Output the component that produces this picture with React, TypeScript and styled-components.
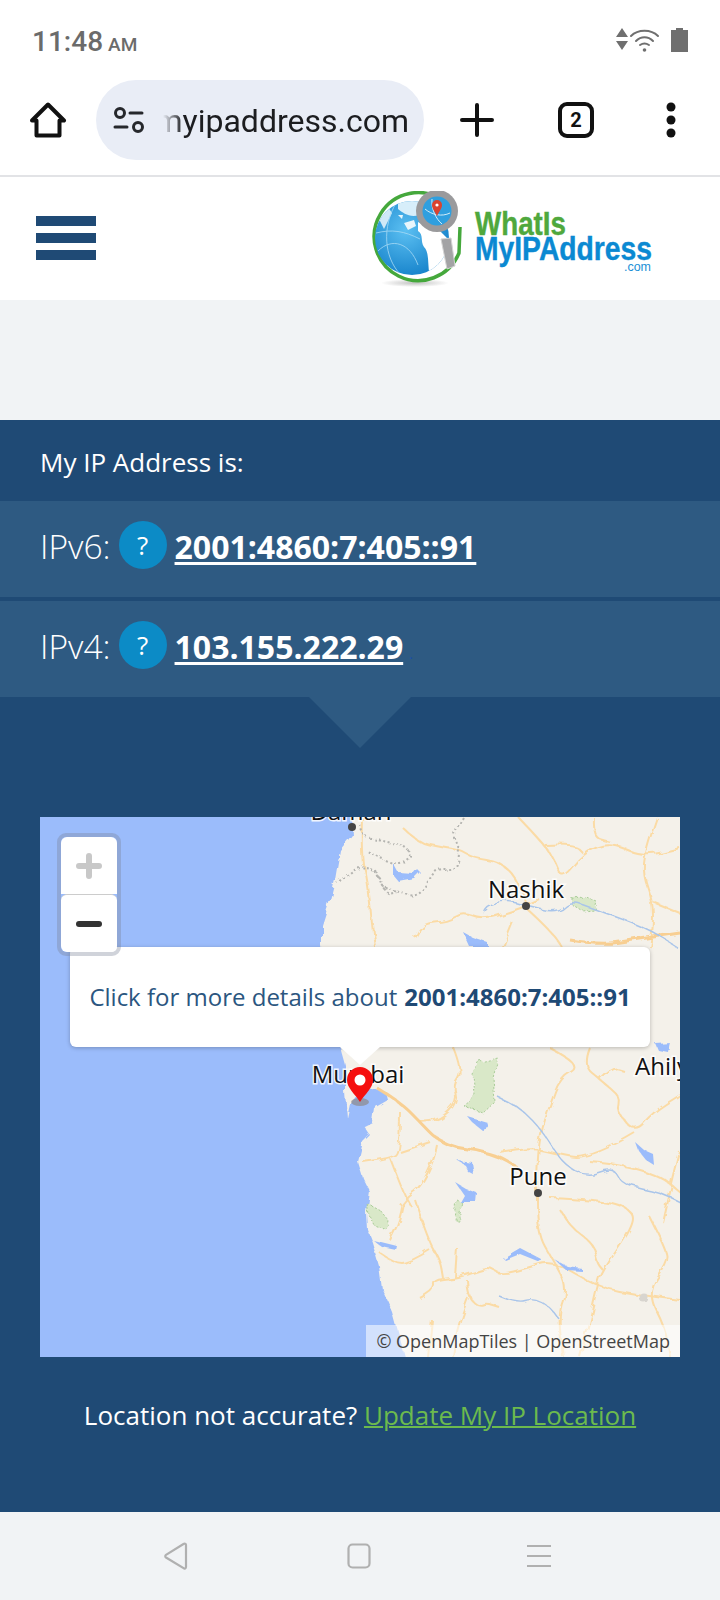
import React from 'react';
import styled, { createGlobalStyle } from 'styled-components';

const GlobalStyle = createGlobalStyle`
  html, body {
    margin: 0;
    padding: 0;
    background: #ffffff;
  }
  * {
    box-sizing: border-box;
  }
`;

const Page = styled.div`
  width: 720px;
  height: 1600px;
  display: flex;
  flex-direction: column;
  overflow: hidden;
  font-family: 'Open Sans', sans-serif;
`;

const StatusBar = styled.div`
  height: 73px;
  flex: none;
  display: flex;
  justify-content: space-between;
  align-items: center;
  padding: 10px 32px 0 32px;
  font-family: Roboto, sans-serif;
  color: #6b6b6b;
`;

const Clock = styled.div`
  font-size: 28px;
  font-weight: 500;
  small {
    font-size: 19px;
    font-weight: 500;
    margin-left: 5px;
  }
`;

const StatusIcons = styled.div`
  display: flex;
  align-items: center;
  margin-top: -3px;
`;

const Toolbar = styled.div`
  height: 104px;
  flex: none;
  display: flex;
  align-items: center;
  padding: 0 0 8px 0;
  border-bottom: 2px solid #e2e3e6;
`;

const ToolSlot = styled.div<{ $w: number }>`
  width: ${p => p.$w}px;
  flex: none;
  display: flex;
  justify-content: center;
  align-items: center;
`;

const UrlPill = styled.div`
  width: 328px;
  height: 80px;
  flex: none;
  border-radius: 40px;
  background: #e9edf6;
  display: flex;
  align-items: center;
  padding: 0 15px 0 17px;
  gap: 18px;
`;

const UrlText = styled.div`
  flex: 1;
  min-width: 0;
  display: flex;
  justify-content: flex-end;
  overflow: hidden;
  white-space: nowrap;
  padding-top: 1px;
  font-family: Roboto, sans-serif;
  font-size: 32px;
  color: #1c1d20;
  -webkit-mask-image: linear-gradient(to right, transparent 0, #000 20px);
  mask-image: linear-gradient(to right, transparent 0, #000 20px);
`;

const TabCount = styled.div`
  width: 36px;
  height: 36px;
  border: 4px solid #111;
  border-radius: 9px;
  display: flex;
  align-items: center;
  justify-content: center;
  font-family: Roboto, sans-serif;
  font-weight: 700;
  font-size: 20px;
  color: #111;
`;

const SiteHeader = styled.header`
  height: 123px;
  flex: none;
  background: #fff;
  display: flex;
  justify-content: space-between;
  align-items: center;
  padding: 0 64px 0 36px;
`;

const Burger = styled.div`
  width: 60px;
  display: flex;
  flex-direction: column;
  gap: 7px;
  margin-top: -2px;
  span {
    display: block;
    height: 10px;
    background: #1f4a75;
  }
`;

const AdSpace = styled.div`
  height: 120px;
  flex: none;
  background: #f1f3f5;
`;

const Hero = styled.section`
  flex: 1;
  background: #1f4a75;
  color: #fff;
  display: flex;
  flex-direction: column;
`;

const Lead = styled.div`
  height: 81px;
  flex: none;
  display: flex;
  align-items: center;
  padding: 3px 40px 0;
  font-size: 26px;
`;

const IpRow = styled.div<{ $gap?: number }>`
  height: 96px;
  flex: none;
  margin-top: ${p => p.$gap ?? 0}px;
  background: #2e5a82;
  display: flex;
  align-items: center;
  padding: 0 0 6px 40px;
`;

const IpLabel = styled.span`
  font-size: 33.5px;
  font-weight: 300;
`;

const HelpBadge = styled.span`
  width: 48px;
  height: 48px;
  margin: 0 8px 3px;
  flex: none;
  border-radius: 50%;
  background: #0c8bc6;
  display: flex;
  align-items: center;
  justify-content: center;
  font-size: 26px;
  font-weight: 400;
`;

const IpLink = styled.a`
  font-size: 32px;
  font-weight: 700;
  color: #fff;
  text-decoration: underline;
  text-decoration-thickness: 3px;
  text-underline-offset: 3px;
`;

const Speck = styled.span`
  font-size: 14px;
  color: #1a4fa8;
  margin: 14px 0 0 6px;
`;

const Pointer = styled.div`
  width: 0;
  height: 0;
  flex: none;
  align-self: center;
  border-left: 51px solid transparent;
  border-right: 51px solid transparent;
  border-top: 51px solid #2e5a82;
`;

const MapFrame = styled.div`
  position: relative;
  height: 540px;
  flex: none;
  margin: 69px 40px 0;
  overflow: hidden;
  background: #9bbcfb;
`;

const MapCanvas = styled.svg`
  display: block;
  width: 640px;
  height: 540px;
`;

const CityLabel = styled.text`
  font-family: 'Open Sans', sans-serif;
  font-size: 24px;
  fill: #111;
  stroke: rgba(255, 255, 255, 0.85);
  stroke-width: 3px;
  paint-order: stroke;
`;

const ZoomBox = styled.div`
  position: absolute;
  left: 17px;
  top: 16px;
  width: 64px;
  height: 123px;
  border: 4px solid rgba(120, 130, 150, 0.35);
  border-radius: 9px;
  display: flex;
  flex-direction: column;
  background-clip: padding-box;
`;

const ZoomButton = styled.div<{ $top?: boolean }>`
  flex: 1;
  background: #fff;
  display: flex;
  align-items: center;
  justify-content: center;
  border-radius: ${p => (p.$top ? '6px 6px 0 0' : '6px')};
  border-top: ${p => (p.$top ? 'none' : '1px solid #ccc')};
`;

const Tooltip = styled.div`
  position: absolute;
  left: 30px;
  top: 130px;
  width: 580px;
  height: 100px;
  padding-bottom: 2px;
  background: #fff;
  border-radius: 6px;
  box-shadow: 0 1px 4px rgba(0, 0, 0, 0.25);
  display: flex;
  align-items: center;
  justify-content: center;
  font-size: 24px;
  color: #2b5680;
  white-space: nowrap;

  b {
    margin-left: 7px;
    font-weight: 700;
    color: #1f4a75;
  }

  &::after {
    content: '';
    position: absolute;
    left: 270px;
    top: 100px;
    border-left: 20px solid transparent;
    border-right: 20px solid transparent;
    border-top: 18px solid #fff;
  }
`;

const Attribution = styled.div`
  position: absolute;
  right: 0;
  bottom: 0;
  height: 32px;
  width: 314px;
  padding-right: 10px;
  background: rgba(255, 255, 255, 0.55);
  display: flex;
  align-items: center;
  justify-content: flex-end;
  font-size: 18px;
  color: #444;
  white-space: nowrap;
`;

const LocationNote = styled.div`
  margin-top: 40px;
  text-align: center;
  font-size: 26px;
  white-space: nowrap;

  a {
    color: #6cba4e;
    text-decoration: underline;
    text-decoration-thickness: 2px;
  }
`;

const NavBar = styled.nav`
  height: 88px;
  flex: none;
  background: #f1f3f5;
  display: flex;
  align-items: center;
  justify-content: center;
  gap: 158px;
  padding-right: 5px;

  svg:last-child {
    margin-left: -3px;
  }
`;

// roads, in page coordinates, same space as the map viewBox
const minorRoads = [
  'M363 817L362 858L368 882L372 925L375 947',
  'M403 828L417 842L440 847L460 850L473 858L500 862L517 878L527 905',
  'M526 906L507 913L482 920L463 912L447 922L423 923L415 938',
  'M526 908L550 930L562 947',
  'M513 922L503 947',
  'M526 906L540 900',
  'M518 817L545 845L555 862L562 880L583 853L610 842L643 857L680 848',
  'M545 845L573 843L583 853',
  'M593 817L592 837L610 842',
  'M657 817L645 852L643 875L653 902L653 928L650 947',
  'M653 902L680 913',
  'M453 1047L463 1072L453 1085L458 1102L440 1120L420 1122',
  'M550 1048L583 1065L560 1078L550 1105L540 1135L537 1168L537 1233L553 1260L568 1288L558 1313L563 1357',
  'M590 1048L583 1065L600 1080L622 1098L617 1112L635 1133L653 1112L680 1095',
  'M600 1080L613 1067L623 1070',
  'M635 1133L590 1160L553 1153L533 1148L500 1153',
  'M590 1162L627 1165L663 1178L680 1192',
  'M680 1152L670 1192L663 1223',
  'M437 1145L435 1158L420 1188L408 1195L400 1205',
  'M400 1112L400 1152L390 1158L363 1162',
  'M430 1142L400 1152',
  'M390 1158L403 1192L410 1205',
  'M550 1198L600 1200L633 1210L633 1227L603 1270L597 1287L590 1320L580 1357',
  'M403 1203L400 1220L390 1240',
  'M415 1200L428 1240L440 1260L443 1278',
  'M380 1253L397 1265L413 1260L430 1250',
  'M420 1298L435 1290L433 1280L453 1278L467 1275L490 1267L500 1275L527 1268L553 1260L597 1287L640 1295L680 1300',
  'M457 1248L455 1277',
  'M467 1280L468 1298L480 1307L487 1304L500 1308',
  'M468 1298L457 1327L453 1357',
  'M560 1210L570 1227L593 1243L597 1263L603 1270',
  'M650 1217L667 1250L668 1263L647 1293L665 1327L670 1357',
  'M432 1320L428 1357',
];

const majorRoads = [
  'M377 1088L400 1102L420 1122L437 1140L457 1148L477 1150L500 1157L517 1167',
  'M570 940L600 945L633 940L680 933',
];

const rivers = [
  'M483 913L485 905L507 900L526 906L557 913L570 900L597 910L630 922L653 932L677 947',
  'M498 1097L520 1107L543 1132L553 1148L565 1165L587 1177L613 1167L620 1182L640 1188L660 1192L680 1202',
  'M498 1295L517 1303L533 1298L550 1307L558 1318',
];

const borders = [
  'M463 817L452 835L460 848L457 870L437 868L427 883L417 898L393 890L380 885L377 872L360 865L337 883',
  'M360 825L363 838L380 840L407 847L412 857L397 865L380 858L368 852',
  'M377 872L385 895L397 892',
];

const lakes = [
  'M393 863L398 872L412 873L416 868L420 872L414 878L398 881L393 875Z',
  'M463 932L472 937L487 942L487 947L470 947Z',
  'M467 1116L487 1122L489 1128L482 1130L472 1122Z',
  'M635 1142L644 1150L653 1154L654 1165L646 1160L638 1150Z',
  'M457 1160L472 1162L474 1175L468 1172L464 1164Z',
  'M455 1182L465 1188L476 1192L475 1202L460 1202L464 1195Z',
  'M373 1240L397 1246L396 1250L382 1247Z',
  'M503 1258L520 1248L541 1259L540 1262L520 1254L505 1260Z',
  'M553 1258L567 1266L582 1268L582 1271L566 1270Z',
  'M655 1043L670 1042L668 1052L658 1050Z',
];

const forests = [
  'M480 1062L498 1058L493 1078L495 1102L483 1113L463 1105L475 1095L473 1075Z',
  'M572 898L585 897L597 902L595 910L582 911L572 905Z',
  'M367 1203L380 1210L388 1220L387 1230L374 1225L369 1215Z',
  'M457 1200L463 1203L458 1220L455 1220Z',
];

// runs past the frame on three sides so the rough filter leaves no gap at the edges
const land =
  'M350 790L352 835L340 850L335 880L330 900L322 925L322 947L340 1047L345 1065L345 1092L347 1118L350 1104L358 1094L372 1088L386 1092L388 1100L374 1108L372 1122L364 1126L370 1135L363 1142L358 1162L363 1178L370 1192L367 1213L368 1230L373 1243L380 1267L383 1290L393 1313L405 1357L412 1385L710 1385L710 790Z';

// turns the straight segments above into soft curves
const smooth = (d: string): string => {
  const n = d.match(/\d+/g)!.map(Number);
  const pts: [number, number][] = [];
  for (let i = 0; i < n.length; i += 2) pts.push([n[i], n[i + 1]]);
  let out = `M${pts[0][0]} ${pts[0][1]}`;
  for (let i = 1; i < pts.length - 1; i++) {
    const mx = (pts[i][0] + pts[i + 1][0]) / 2;
    const my = (pts[i][1] + pts[i + 1][1]) / 2;
    out += `Q${pts[i][0]} ${pts[i][1]} ${mx} ${my}`;
  }
  const last = pts[pts.length - 1];
  return `${out}L${last[0]} ${last[1]}`;
};

const MapDrawing: React.FC = () => (
  <MapCanvas viewBox="40 817 640 540">
    <defs>
      <filter id="rough" x="-5%" y="-5%" width="110%" height="110%">
        <feTurbulence type="fractalNoise" baseFrequency="0.07" numOctaves="3" seed="4" />
        <feDisplacementMap in="SourceGraphic" scale="7" />
        <feGaussianBlur stdDeviation="0.35" />
      </filter>
    </defs>
    <g filter="url(#rough)">
      <path d={land} fill="#f4f1ea" />
      {forests.map(d => (
        <path key={d} d={d} fill="#d9e8c8" stroke="#a9cc98" strokeDasharray="2 2" />
      ))}
      {minorRoads.map(d => (
        <path key={d} d={smooth(d)} fill="none" stroke="#fbdba5" strokeWidth="2" />
      ))}
      {majorRoads.map(d => (
        <path key={d} d={smooth(d)} fill="none" stroke="#f8cf92" strokeWidth="3" />
      ))}
      {rivers.map(d => (
        <path key={d} d={smooth(d)} fill="none" stroke="#a9c5ea" strokeWidth="1.4" />
      ))}
      {borders.map(d => (
        <path key={d} d={smooth(d)} fill="none" stroke="#b4b4b0" strokeWidth="2" strokeDasharray="2 2.5" />
      ))}
      {lakes.map(d => (
        <path key={d} d={d} fill="#9bbcfb" />
      ))}
      <circle cx="643" cy="1297" r="4.5" fill="#d8d5cf" />
    </g>
    <circle cx="352" cy="827" r="4" fill="#444" />
    <circle cx="526" cy="906" r="4" fill="#444" />
    <circle cx="538" cy="1193" r="4" fill="#444" />
    <CityLabel x="351" y="820" textAnchor="middle">Daman</CityLabel>
    <CityLabel x="526" y="898" textAnchor="middle">Nashik</CityLabel>
    <CityLabel x="358" y="1083" textAnchor="middle">Mumbai</CityLabel>
    <CityLabel x="538" y="1185" textAnchor="middle">Pune</CityLabel>
    <CityLabel x="635" y="1075">Ahilyanagar</CityLabel>
    <ellipse cx="360" cy="1102" rx="9" ry="4" fill="#8a8078" opacity="0.6" />
    <path
      d="M360 1102C355 1094 347 1088 347 1080A13 13 0 0 1 373 1080C373 1088 365 1094 360 1102Z"
      fill="#f50f0f"
    />
    <circle cx="360" cy="1080" r="5.5" fill="#fff" />
  </MapCanvas>
);

const Logo: React.FC = () => (
  <svg width="284" height="96" viewBox="372 188 284 96">
    <defs>
      <radialGradient id="globe" cx="0.42" cy="0.4" r="0.7">
        <stop offset="0" stopColor="#5cc0f2" />
        <stop offset="1" stopColor="#0a78c4" />
      </radialGradient>
      <radialGradient id="shade" cx="0.5" cy="0.5" r="0.5">
        <stop offset="0" stopColor="#999" stopOpacity="0.6" />
        <stop offset="1" stopColor="#999" stopOpacity="0" />
      </radialGradient>
      <clipPath id="globeClip">
        <circle cx="412" cy="235" r="37" />
      </clipPath>
    </defs>
    <ellipse cx="415" cy="280" rx="34" ry="4" fill="url(#shade)" />
    <path d="M444 198A44 44 0 1 0 459 250L460 224" fill="none" stroke="#45a83c" strokeWidth="3.5" />
    <g clipPath="url(#globeClip)">
      <rect x="372" y="195" width="80" height="80" fill="url(#globe)" />
      <path d="M398 196L416 194C430 198 427 212 419 212C410 215 403 210 398 206Z" fill="#d7eefa" />
      <path
        d="M418 219C424 223 432 220 440 228L452 240L448 260L430 274C427 262 430 250 424 244C420 238 424 232 418 228Z"
        fill="#ffffff"
      />
      <path d="M404 220L414 217L416 223L408 227ZM398 212L403 212L402 216Z" fill="#e8f6fc" />
      <path d="M378 214L388 204L392 210L384 226Z" fill="#cfe9f7" />
      <path
        d="M378 248C392 234 410 240 418 262M396 200C382 224 384 254 400 271M376 230C392 226 404 228 420 236"
        fill="none"
        stroke="#a8dbf5"
        strokeWidth="0.8"
      />
    </g>
    <circle cx="437" cy="208" r="21" fill="#9a9a9c" />
    <circle cx="437" cy="208" r="14.5" fill="#2f9fdf" />
    <path d="M425 206C432 212 442 214 450 210M432 196C431 206 436 216 442 221" fill="none" stroke="#d2edf9" strokeWidth="1" />
    <path d="M437 213C434 207 432 205 432 202A5 5 0 0 1 442 202C442 205 440 207 437 213Z" fill="#d9432f" />
    <circle cx="437" cy="202" r="1.6" fill="#fff" />
    <path d="M441 236L451 235L455 263L447 266Z" fill="#a3a3a5" stroke="#d4d4d4" strokeWidth="1" />
    <text x="475" y="232" fontFamily="'Liberation Sans', sans-serif" fontWeight="700" fontSize="33" fill="#4fa83d" stroke="#4fa83d" strokeWidth="0.4" textLength="91" lengthAdjust="spacingAndGlyphs">
      WhatIs
    </text>
    <text x="475" y="257" fontFamily="'Liberation Sans', sans-serif" fontWeight="700" fontSize="33" fill="#0b89d2" stroke="#0b89d2" strokeWidth="0.4" textLength="177" lengthAdjust="spacingAndGlyphs">
      MyIPAddress
    </text>
    <text x="624" y="268" fontFamily="'Liberation Sans', sans-serif" fontSize="13" fill="#1a8fd6" textLength="27" lengthAdjust="spacingAndGlyphs">
      .com
    </text>
  </svg>
);

export default function App() {
  return (
    <Page>
      <GlobalStyle />
      <StatusBar>
        <Clock>
          11:48<small>AM</small>
        </Clock>
        <StatusIcons>
          <svg width="74" height="26" viewBox="0 0 74 26">
            <path d="M2 10L8 1L14 10ZM2 14H14L8 23Z" fill="#6f6f6f" />
            <g fill="none" stroke="#6f6f6f" strokeWidth="2" strokeLinecap="round">
              <path d="M17 9C24 2 37 2 44 9" />
              <path d="M22 14C27 9 34 9 39 14" />
              <path d="M26 18C29 16 32 16 35 18" />
            </g>
            <circle cx="30.5" cy="23" r="1.8" fill="#6f6f6f" />
            <path d="M57 3H62V1H69V3H74V25H57Z" fill="#6f6f6f" />
          </svg>
        </StatusIcons>
      </StatusBar>
      <Toolbar>
        <ToolSlot $w={96}>
          <svg width="38" height="36" viewBox="0 0 38 36">
            <path
              d="M19 2.5L35 18.5H30.5V33.5H7.5V18.5H3Z"
              fill="none"
              stroke="#111"
              strokeWidth="4"
              strokeLinejoin="round"
            />
          </svg>
        </ToolSlot>
        <UrlPill>
          <svg width="32" height="26" viewBox="0 0 32 26" style={{ flex: 'none' }}>
            <g fill="none" stroke="#26282c" strokeWidth="3" strokeLinecap="round">
              <circle cx="7" cy="6" r="4.5" />
              <path d="M17 6H29" />
              <path d="M2 20H14" />
              <circle cx="25" cy="20" r="4.5" />
            </g>
          </svg>
          <UrlText>whatismyipaddress.com</UrlText>
        </UrlPill>
        <ToolSlot $w={106}>
          <svg width="34" height="34" viewBox="0 0 34 34">
            <path d="M17 2V32M2 17H32" stroke="#111" strokeWidth="4" strokeLinecap="round" />
          </svg>
        </ToolSlot>
        <ToolSlot $w={92}>
          <TabCount>2</TabCount>
        </ToolSlot>
        <ToolSlot $w={98}>
          <svg width="10" height="36" viewBox="0 0 10 36">
            <circle cx="5" cy="5" r="4.5" fill="#111" />
            <circle cx="5" cy="18" r="4.5" fill="#111" />
            <circle cx="5" cy="31" r="4.5" fill="#111" />
          </svg>
        </ToolSlot>
      </Toolbar>
      <SiteHeader>
        <Burger>
          <span />
          <span />
          <span />
        </Burger>
        <Logo />
      </SiteHeader>
      <AdSpace />
      <Hero>
        <Lead>My IP Address is:</Lead>
        <IpRow>
          <IpLabel>IPv6:</IpLabel>
          <HelpBadge>?</HelpBadge>
          <IpLink>2001:4860:7:405::91</IpLink>
        </IpRow>
        <IpRow $gap={4}>
          <IpLabel>IPv4:</IpLabel>
          <HelpBadge>?</HelpBadge>
          <IpLink>103.155.222.29</IpLink>
          <Speck>.</Speck>
        </IpRow>
        <Pointer />
        <MapFrame>
          <MapDrawing />
          <Tooltip>
            Click for more details about<b>2001:4860:7:405::91</b>
          </Tooltip>
          <ZoomBox>
            <ZoomButton $top>
              <svg width="26" height="26" viewBox="0 0 26 26">
                <path d="M13 3V23M3 13H23" stroke="#c8c8c8" strokeWidth="6" strokeLinecap="round" />
              </svg>
            </ZoomButton>
            <ZoomButton>
              <svg width="26" height="8" viewBox="0 0 26 8">
                <path d="M3 4H23" stroke="#333" strokeWidth="6" strokeLinecap="round" />
              </svg>
            </ZoomButton>
          </ZoomBox>
          <Attribution>© OpenMapTiles | OpenStreetMap</Attribution>
        </MapFrame>
        <LocationNote>
          Location not accurate? <a>Update My IP Location</a>
        </LocationNote>
      </Hero>
      <NavBar>
        <svg width="26" height="28" viewBox="0 0 26 28">
          <path
            d="M23 3V25C23 26.5 21.5 27 20.5 26L3 15.5C2 14.8 2 13.5 3 12.8L20.5 2C21.5 1.4 23 1.8 23 3Z"
            fill="none"
            stroke="#b0b0b0"
            strokeWidth="2.2"
          />
        </svg>
        <svg width="24" height="26" viewBox="0 0 24 26">
          <rect x="1.5" y="1.5" width="21" height="23" rx="4" fill="none" stroke="#b0b0b0" strokeWidth="2.2" />
        </svg>
        <svg width="26" height="24" viewBox="0 0 26 24">
          <path d="M1 2H25M1 12H25M1 22H25" stroke="#b0b0b0" strokeWidth="2.2" />
        </svg>
      </NavBar>
    </Page>
  );
}
